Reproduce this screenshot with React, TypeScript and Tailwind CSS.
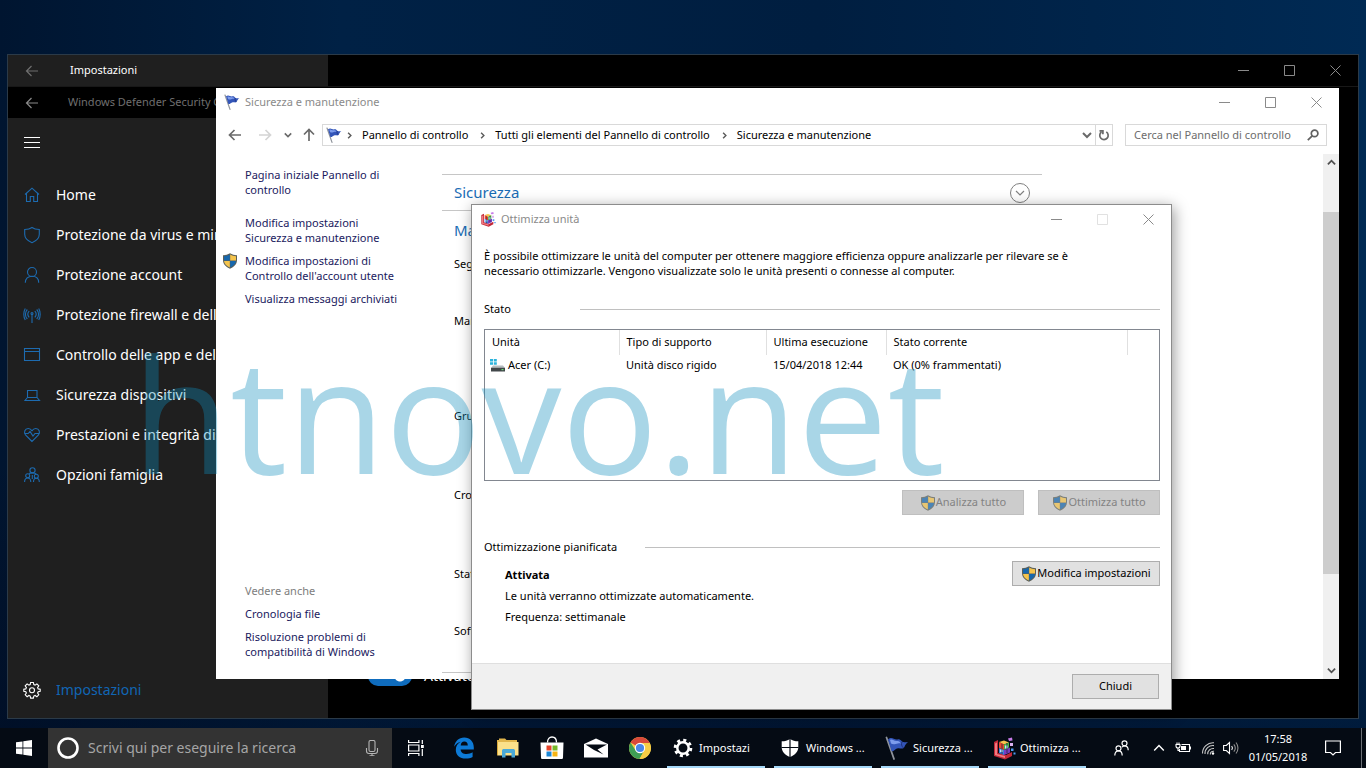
import type { ReactNode } from "react";

type IconProps = { className?: string };

const securityNav = [
  { label: "Home", icon: <HomeIcon /> },
  { label: "Protezione da virus e minacce", icon: <ShieldOutlineIcon /> },
  { label: "Protezione account", icon: <PersonIcon /> },
  { label: "Protezione firewall e della rete", icon: <AntennaIcon /> },
  { label: "Controllo delle app e del browser", icon: <BrowserIcon /> },
  { label: "Sicurezza dispositivi", icon: <LaptopIcon /> },
  { label: "Prestazioni e integrità dispositivo", icon: <HeartIcon /> },
  { label: "Opzioni famiglia", icon: <FamilyIcon /> },
];

const maintenanceItems = [
  { label: "Segnala problemi", height: "h-[57px]" },
  { label: "Manutenzione automatica", height: "h-[95px]" },
  { label: "Gruppo Home", height: "h-[79px]" },
  { label: "Cronologia file", height: "h-[79px]" },
  { label: "Stato unità", height: "h-[57px]" },
  { label: "Software dispositivi", height: "h-[49px]" },
];

const runningApps = [
  { label: "Impostazi", icon: <GearSolidIcon /> },
  { label: "Windows ...", icon: <DefenderIcon /> },
  { label: "Sicurezza ...", icon: <FlagIcon className="w-6 h-6" /> },
  { label: "Ottimizza ...", icon: <DefragIcon className="w-6 h-6" /> },
];

export default function App() {
  return (
    <div
      className="h-screen min-h-[768px] flex flex-col overflow-hidden bg-[linear-gradient(180deg,transparent_0%,transparent_60%,rgba(0,8,28,0.5)_100%),linear-gradient(90deg,#001530_0%,#002145_25%,#001e40_60%,#002a54_100%)] font-['Noto_Sans','Open_Sans',sans-serif] text-[11px] text-black"
    >
      <main className="relative flex-1">
        <SettingsWindow />
        <MaintenanceWindow />
        <OptimizeDialog />
        <div className="absolute left-[132px] top-[332px] font-['Open_Sans','Noto_Sans',sans-serif] text-[160px] leading-none font-medium text-[#118dbc]/36 pointer-events-none select-none">
          htnovo.net
        </div>
      </main>
      <Taskbar />
    </div>
  );
}

/* Windows */

function SettingsWindow() {
  return (
    <section className="absolute left-[7px] right-[7px] top-[54px] bottom-[9px] flex flex-col bg-black border border-[#2b3a48] text-white overflow-hidden">
      <header className="flex h-[31px] shrink-0">
        <div className="w-80 flex items-center bg-[#1f1f1f] pl-[17px]">
          <button aria-label="Indietro" className="text-[#6f6f6f]">
            <ArrowIcon />
          </button>
          <span className="pl-[31px]">Impostazioni</span>
        </div>
        <WindowButtons className="ml-auto text-[#8a8a8a] pr-[17px]" />
      </header>
      <div className="flex items-center h-8 shrink-0 pl-[17px] text-[#6f6f6f] border-t border-[#181818]">
        <button aria-label="Indietro" className="text-[#8a8a8a]">
          <ArrowIcon />
        </button>
        <span className="pl-[29px]">Windows Defender Security Center</span>
      </div>
      <div className="flex flex-1 min-h-0">
        <aside className="w-80 flex flex-col bg-[#1f1f1f] pl-4">
          <button aria-label="Menu" className="h-12 w-4 flex flex-col justify-center gap-1">
            <span className="h-px w-4 bg-white" />
            <span className="h-px w-4 bg-white" />
            <span className="h-px w-4 bg-white" />
          </button>
          <nav className="pt-[9px]">
            {securityNav.map((item) => (
              <a key={item.label} href="#" className="flex items-center gap-4 h-10 text-sm whitespace-nowrap">
                <span className="text-[#1d6bb0]">{item.icon}</span>
                {item.label}
              </a>
            ))}
          </nav>
          <a href="#" className="mt-auto mb-2 flex items-center gap-4 h-10 text-sm text-[#1166b5]">
            <GearOutlineIcon />
            Impostazioni
          </a>
        </aside>
        <div className="flex-1 flex items-end pl-10 pb-8">
          <label className="flex items-center gap-3 text-sm">
            <input
              type="checkbox"
              defaultChecked
              className="appearance-none w-11 h-5 rounded-full bg-[#0f6cbd] bg-[radial-gradient(circle_at_32px_10px,white_5px,transparent_6px)]"
            />
            Attivato
          </label>
        </div>
      </div>
    </section>
  );
}

function MaintenanceWindow() {
  return (
    <section className="absolute left-[216px] right-[27px] top-[88px] bottom-[49px] flex flex-col bg-white overflow-hidden">
      <header className="flex items-center h-7 shrink-0 pl-2 gap-[5px] text-[#8a8a8a]">
        <FlagIcon className="w-4 h-4" />
        Sicurezza e manutenzione
        <WindowButtons className="ml-auto pr-[17px]" />
      </header>

      <div className="flex items-center h-[38px] shrink-0 pl-3 pr-3">
        <div className="flex items-center w-[94px] text-[#6a6a6a]">
          <button aria-label="Indietro"><ArrowIcon bold /></button>
          <button aria-label="Avanti" className="ml-4 rotate-180 text-[#d4d4d4]"><ArrowIcon bold /></button>
          <button aria-label="Percorsi recenti" className="ml-3"><ChevronIcon className="w-2 h-2" /></button>
          <button aria-label="Su" className="ml-[10px] rotate-90"><ArrowIcon bold /></button>
        </div>
        <nav className="flex-1 flex items-center h-[22px] border border-[#d9d9d9] pl-[3px]">
          <FlagIcon className="w-4 h-4 mr-1" />
          <Crumb>Pannello di controllo</Crumb>
          <Crumb>Tutti gli elementi del Pannello di controllo</Crumb>
          <Crumb>Sicurezza e manutenzione</Crumb>
          <button aria-label="Posizioni precedenti" className="ml-auto mr-[3px] text-[#6a6a6a]">
            <ChevronIcon className="w-[10px] h-[10px]" />
          </button>
          <button aria-label="Aggiorna" className="w-[17px] h-full flex items-center justify-center border-l border-[#d9d9d9] text-[#6a6a6a]">
            <RefreshIcon />
          </button>
        </nav>
        <label className="ml-3 flex items-center w-[202px] h-[22px] border border-[#d9d9d9] pl-2 pr-[7px]">
          <input
            type="search"
            aria-label="Cerca nel Pannello di controllo"
            placeholder="Cerca nel Pannello di controllo"
            className="flex-1 min-w-0 outline-none placeholder:text-[#6d6d6d] placeholder:opacity-100"
          />
          <SearchIcon />
        </label>
      </div>

      <div className="flex flex-1 min-h-0">
        <aside className="w-[226px] shrink-0 flex flex-col justify-between pl-[29px] pt-[13px] pb-5 leading-[15px] text-[#1a1a5e]">
          <nav className="flex flex-col items-start gap-2">
            <a href="#" className="mb-[10px]">
              Pagina iniziale Pannello di<br />controllo
            </a>
            <a href="#">
              Modifica impostazioni<br />Sicurezza e manutenzione
            </a>
            <a href="#" className="relative">
              <UacShieldIcon className="absolute -left-[23px] top-0 w-4 h-4" />
              Modifica impostazioni di<br />Controllo dell'account utente
            </a>
            <a href="#">Visualizza messaggi archiviati</a>
          </nav>
          <nav className="flex flex-col items-start gap-2">
            <span className="text-[#7d7d7d]">Vedere anche</span>
            <a href="#">Cronologia file</a>
            <a href="#">
              Risoluzione problemi di<br />compatibilità di Windows
            </a>
          </nav>
        </aside>

        <div className="flex-1 min-w-0 pt-5 overflow-hidden">
          <div className="max-w-[600px] border-b border-[#c6c6c6]">
            <div className="flex items-center justify-between h-[37px] pl-3 pr-3 border-y border-[#c6c6c6]">
              <h2 className="text-[15px] text-[#1a6cb5]">Sicurezza</h2>
              <button
                aria-label="Espandi"
                className="w-5 h-5 flex items-center justify-center rounded-full border border-[#808080] text-[#808080]"
              >
                <ChevronIcon thin className="w-[10px] h-[10px]" />
              </button>
            </div>
            <h2 className="h-[38px] flex items-center pl-3 text-[15px] text-[#1a6cb5]">Manutenzione</h2>
            <ul className="pl-3 pt-[7px] leading-4">
              {maintenanceItems.map((item) => (
                <li key={item.label} className={item.height}>
                  {item.label}
                </li>
              ))}
            </ul>
          </div>
        </div>

        <div className="w-4 shrink-0 flex flex-col bg-[#f0f0f0] text-[#505050]">
          <button aria-label="Scorri su" className="h-[58px] flex justify-center pt-1">
            <ChevronIcon className="w-[9px] h-[9px] rotate-180" />
          </button>
          <div className="flex-1 bg-[#cdcdcd]" />
          <button aria-label="Scorri giù" className="h-[105px] flex justify-center items-end pb-1">
            <ChevronIcon className="w-[9px] h-[9px]" />
          </button>
        </div>
      </div>
    </section>
  );
}

function OptimizeDialog() {
  return (
    <section className="absolute left-[471px] right-[194px] top-[204px] bottom-[18px] flex flex-col bg-white border border-[#8c8c8c] shadow-[2px_3px_14px_rgba(0,0,0,0.4)]">
      <header className="flex items-center h-7 shrink-0 pl-2 gap-[5px] text-[#8a8a8a]">
        <DefragIcon className="w-4 h-4" />
        Ottimizza unità
        <WindowButtons className="ml-auto pr-[17px]" maximizeDisabled />
      </header>

      <div className="flex-1 pl-3 pr-[11px] pt-[15px]">
        <p className="leading-[15px] max-w-[600px]">
          È possibile ottimizzare le unità del computer per ottenere maggiore efficienza oppure analizzarle per rilevare se è
          necessario ottimizzarle. Vengono visualizzate solo le unità presenti o connesse al computer.
        </p>

        <div className="mt-[23px] flex items-center leading-4">
          <h3 className="w-24">Stato</h3>
          <hr className="flex-1 border-[#c0c0c0]" />
        </div>

        <div className="mt-3 h-[152px] border border-[#828790]">
          <table className="w-full table-fixed text-left">
            <thead>
              <tr className="h-[25px]">
                <th className="w-[134px] pl-[7px] font-normal border-r border-[#e0e0e0]">Unità</th>
                <th className="w-[147px] pl-[7px] font-normal border-r border-[#e0e0e0]">Tipo di supporto</th>
                <th className="w-[120px] pl-[7px] font-normal border-r border-[#e0e0e0]">Ultima esecuzione</th>
                <th className="w-[241px] pl-[7px] font-normal border-r border-[#e0e0e0]">Stato corrente</th>
                <th />
              </tr>
            </thead>
            <tbody>
              <tr className="h-5">
                <td className="pl-[5px]">
                  <span className="flex items-center gap-[3px]">
                    <DriveIcon />
                    Acer (C:)
                  </span>
                </td>
                <td className="pl-[7px]">Unità disco rigido</td>
                <td className="pl-[7px]">15/04/2018 12:44</td>
                <td className="pl-[7px]">OK (0% frammentati)</td>
                <td />
              </tr>
            </tbody>
          </table>
        </div>

        <div className="mt-[9px] flex justify-end gap-[14px]">
          <button disabled className="flex items-center justify-center w-[122px] h-[25px] bg-[#cccccc] border border-[#bfbfbf] text-[#838383]">
            <UacShieldIcon className="w-4 h-4 opacity-70" />
            Analizza tutto
          </button>
          <button disabled className="flex items-center justify-center w-[122px] h-[25px] bg-[#cccccc] border border-[#bfbfbf] text-[#838383]">
            <UacShieldIcon className="w-4 h-4 opacity-70" />
            Ottimizza tutto
          </button>
        </div>

        <div className="mt-6 flex items-center leading-4">
          <h3 className="w-[161px]">Ottimizzazione pianificata</h3>
          <hr className="flex-1 border-[#c0c0c0]" />
        </div>

        <div className="mt-[6px] pl-[21px] flex justify-between items-start">
          <div className="pt-[6px] flex flex-col gap-[5px] leading-4">
            <strong>Attivata</strong>
            <p>Le unità verranno ottimizzate automaticamente.</p>
            <p>Frequenza: settimanale</p>
          </div>
          <button className="flex items-center justify-center w-[148px] h-[25px] bg-[#e1e1e1] border border-[#adadad]">
            <UacShieldIcon className="w-4 h-4" />
            Modifica impostazioni
          </button>
        </div>
      </div>

      <footer className="flex items-center justify-end h-[46px] shrink-0 pr-3 bg-[#f0f0f0] border-t border-[#dfdfdf]">
        <button className="w-[87px] h-[25px] bg-[#e1e1e1] border border-[#adadad]">Chiudi</button>
      </footer>
    </section>
  );
}

function Taskbar() {
  return (
    <footer className="flex items-stretch h-10 shrink-0 bg-[#050b14] text-white">
      <button aria-label="Start" className="w-12 flex items-center justify-center">
        <WindowsLogo />
      </button>
      <label className="w-[344px] flex items-center pl-2 pr-3 bg-[#333333]">
        <svg className="w-6 h-6" viewBox="0 0 24 24" fill="none">
          <circle cx="12" cy="12" r="9.5" stroke="white" strokeWidth="2.6" />
        </svg>
        <input
          type="search"
          aria-label="Scrivi qui per eseguire la ricerca"
          placeholder="Scrivi qui per eseguire la ricerca"
          className="ml-2 flex-1 min-w-0 text-sm outline-none placeholder:text-[#a6a6a6] placeholder:opacity-100"
        />
        <MicIcon />
      </label>
      <button aria-label="Visualizzazione attività" className="w-12 flex items-center justify-center">
        <TaskViewIcon />
      </button>
      <div className="flex">
        <PinnedApp name="Microsoft Edge"><EdgeIcon /></PinnedApp>
        <PinnedApp name="Esplora file"><FolderIcon /></PinnedApp>
        <PinnedApp name="Microsoft Store"><StoreIcon /></PinnedApp>
        <PinnedApp name="Posta"><MailIcon /></PinnedApp>
        <PinnedApp name="Google Chrome"><ChromeIcon /></PinnedApp>
      </div>
      <div className="flex gap-[9px] pl-[5px]">
        {runningApps.map((app) => (
          <button
            key={app.label}
            className="w-[98px] flex items-center gap-1 pl-1 pt-[2px] border-b-2 border-[#a5d8f8] whitespace-nowrap"
          >
            {app.icon}
            {app.label}
          </button>
        ))}
      </div>
      <div className="ml-auto flex items-center">
        <button aria-label="Contatti" className="mr-6"><PeopleIcon /></button>
        <button aria-label="Mostra icone nascoste" className="mr-[10px]">
          <ChevronIcon thin className="w-3 h-3 rotate-180" />
        </button>
        <button aria-label="Batteria" className="mr-[10px]"><BatteryIcon /></button>
        <button aria-label="Rete" className="mr-[6px]"><WifiIcon /></button>
        <button aria-label="Volume" className="mr-2"><VolumeIcon /></button>
        <button className="w-[62px] text-center leading-[18px]">
          17:58<br />01/05/2018
        </button>
        <button aria-label="Centro notifiche" className="ml-4"><NotificationIcon /></button>
        <button aria-label="Mostra desktop" className="ml-5 w-[5px] h-10 border-l border-[#6b6f75]" />
      </div>
    </footer>
  );
}

/* Small parts */

function WindowButtons({ className, maximizeDisabled }: IconProps & { maximizeDisabled?: boolean }) {
  return (
    <div className={`flex items-center gap-[35px] ${className}`}>
      <button aria-label="Riduci a icona">
        <svg className="w-[11px] h-[11px]" viewBox="0 0 11 11" stroke="currentColor"><path d="M0 5.5h11" /></svg>
      </button>
      <button aria-label="Ingrandisci" disabled={maximizeDisabled} className={maximizeDisabled ? "opacity-25" : ""}>
        <svg className="w-[11px] h-[11px]" viewBox="0 0 11 11" fill="none" stroke="currentColor"><path d="M.5.5h10v10H.5z" /></svg>
      </button>
      <button aria-label="Chiudi">
        <svg className="w-[11px] h-[11px]" viewBox="0 0 11 11" stroke="currentColor"><path d="M.5.5l10 10M10.5.5l-10 10" /></svg>
      </button>
    </div>
  );
}

function Crumb({ children }: { children: ReactNode }) {
  return (
    <>
      <ChevronIcon className="w-[7px] h-[7px] -rotate-90 mr-[9px] text-[#5a5a5a]" />
      <a href="#" className="mr-[11px] whitespace-nowrap">{children}</a>
    </>
  );
}

function PinnedApp({ name, children }: { name: string; children: ReactNode }) {
  return (
    <button aria-label={name} className="w-11 flex items-center justify-center first:ml-[2px]">
      {children}
    </button>
  );
}

/* Icons */

function ArrowIcon({ bold }: { bold?: boolean }) {
  return (
    <svg className="w-[14px] h-[14px]" viewBox="0 0 14 14" fill="none" stroke="currentColor" strokeWidth={bold ? 1.7 : 1.2}>
      <path d="M13 7H1.5M6.5 2l-5 5 5 5" />
    </svg>
  );
}

function ChevronIcon({ className, thin }: IconProps & { thin?: boolean }) {
  return (
    <svg className={className} viewBox="0 0 10 10" fill="none" stroke="currentColor" strokeWidth={thin ? 1.2 : 2}>
      <path d="M1 3l4 4 4-4" />
    </svg>
  );
}

function RefreshIcon() {
  return (
    <svg className="w-3 h-3" viewBox="0 0 12 12" fill="none" stroke="currentColor" strokeWidth="1.7">
      <path d="M8.300 2.900a4.200 4.200 0 1 1-4.800.1M1.500 1.800h3.400v3.400" />
    </svg>
  );
}

function SearchIcon() {
  return (
    <svg className="w-3 h-3 text-[#606060]" viewBox="0 0 12 12" fill="none" stroke="currentColor" strokeWidth="1.7">
      <circle cx="7.6" cy="4.4" r="3.3" />
      <path d="M5.2 6.8L.8 11.2" />
    </svg>
  );
}

function FlagIcon({ className }: IconProps) {
  return (
    <svg className={className} viewBox="0 0 24 24">
      <path d="M1.5 1.5L9 23" stroke="#8f949c" strokeWidth="1.8" strokeLinecap="round" />
      <path d="M3 3.5c4-3.5 6 .8 9.500 0 2.500-.6 3 .7 4.500 2 1.500 1.200 4 .6 6 .4-2 1.600-3 3.400-3.600 5-1.400 3-4 1-6.400 1.400-3 .5-4 3.700-6.500 2.600z" fill="#3355b8" />
      <path d="M5 4c2.500-1.400 4 1.500 7 1 2-.3 3 .8 3.800 2.500-2.800-1-4 .5-6.300.8-1.500.2-2.500-.3-3.500-.8z" fill="#7d9cec" />
      <path d="M17 6c-1 2-.5 4 1.500 6" stroke="#1d2f7a" strokeWidth="1" fill="none" />
    </svg>
  );
}

function UacShieldIcon({ className }: IconProps) {
  return (
    <svg className={className} viewBox="0 0 16 16">
      <path d="M8 .3C6 1.600 3.500 2.200 1 2.200V7c0 4.200 3 7 7 8.800 4-1.800 7-4.600 7-8.800V2.200C12.500 2.200 10 1.600 8 .3z" fill="#5b5f58" />
      <path d="M7.800 1.500C6 2.500 4 3 2 3.200V7.600h5.800z" fill="#1767ac" />
      <path d="M8.200 1.500C10 2.500 12 3 14 3.200v4.400H8.200z" fill="#f5c44c" />
      <path d="M2 8h5.800v6.600C4.500 13 2.300 11 2 8z" fill="#f5c44c" />
      <path d="M14 8H8.200v6.600C11.500 13 13.700 11 14 8z" fill="#1767ac" />
    </svg>
  );
}

function DefragIcon({ className }: IconProps) {
  return (
    <svg className={className} viewBox="0 0 24 24">
      <path d="M2 6l4-2v13l8 2 6-3v4l-7 3.500L2 20z" fill="#c22838" />
      <path d="M3 7.500l2-1V18l8 2v2L3 19z" fill="#f07a80" />
      <path d="M7 6l5-1.500 5 2-5 2z" fill="#f6c34c" />
      <path d="M7 6l5 2.500V14l-5-2z" fill="#e8472f" />
      <path d="M12 8.500l5-2v5L12 14z" fill="#4ab648" />
      <path d="M7 12l5 2v5l-5-2z" fill="#3b7fe0" />
      <path d="M12 14l6-2.500v5L12 19z" fill="#7a3cc0" />
      <path d="M13 9.500h3v3h-3zM8 13.500h3v2.500H8z" fill="#b9e7ff" />
      <path d="M10 8v10M15 7v10" stroke="#27263a" strokeWidth=".8" />
      <path d="M16 2.500l4-1 .5 3-3.500.5z" fill="#c77be8" />
      <path d="M18 7h3v3h-3z" fill="#ddb2f0" />
      <path d="M19 12.500h2.500v2.500H19zM21.500 16.500h2v2h-2z" fill="#4e9cf0" />
    </svg>
  );
}

function DriveIcon() {
  return (
    <svg className="w-[15px] h-[15px]" viewBox="0 0 15 15">
      <path d="M0 1h3v2.500H0zM3.800 1h3v2.500h-3zM0 4.300h3v2.500H0zM3.800 4.300h3v2.500h-3z" fill="#2bb3dc" />
      <path d="M3 7.500h10l2 2.500H1z" fill="#b5bcbf" />
      <path d="M1 9.800h14v3.700H1z" fill="#42474a" />
      <path d="M11.500 11h2v1.200h-2z" fill="#6be07a" />
    </svg>
  );
}

function NavSvg({ children, className }: { children: ReactNode; className?: string }) {
  return (
    <svg className={`w-4 h-4 overflow-visible ${className ?? ""}`} viewBox="0 0 16 16" fill="none" stroke="currentColor" strokeWidth="1.1">
      {children}
    </svg>
  );
}

function HomeIcon() {
  return <NavSvg><path d="M1 7.500l7-6.300 7 6.300M2.500 6.300v8.200h3.800V9.500h3.400v5h3.800V6.300" /></NavSvg>;
}

function ShieldOutlineIcon() {
  return <NavSvg><path d="M8 .5C6 2 3.500 2.500.7 2.500v4.800c0 4 3 6.700 7.300 8.400 4.300-1.700 7.300-4.400 7.300-8.400V2.500C12.500 2.500 10 2 8 .5z" /></NavSvg>;
}

function PersonIcon() {
  return (
    <NavSvg>
      <circle cx="8" cy="5" r="4.500" />
      <path d="M1.300 15.700c0-4 2.700-6.500 6.700-6.500s6.700 2.500 6.700 6.500" />
    </NavSvg>
  );
}

function AntennaIcon() {
  return (
    <NavSvg>
      <path d="M8 7v9M5.200 4c-1.600 1.800-1.600 4.600 0 6.400M10.800 4c1.600 1.800 1.600 4.600 0 6.400M3.300 2.500C.8 5 .8 9.500 3.300 12M12.700 2.500c2.500 2.500 2.500 7 0 9.500M1.300 1.500c-2 3-2 8.500 0 11.500M14.700 1.500c2 3 2 8.500 0 11.500" />
      <circle cx="8" cy="6.500" r="1" />
    </NavSvg>
  );
}

function BrowserIcon() {
  return <NavSvg><path d="M.5 1.500h15v12H.5zM.5 4.500h15" /></NavSvg>;
}

function LaptopIcon() {
  return <NavSvg><path d="M3.500 3.500h9.500v7H3.500zM3.500 10.500L1 13.500h14.500L13 10.500" /></NavSvg>;
}

function HeartIcon() {
  return (
    <NavSvg>
      <path d="M8 14.500L1.500 8C-.5 5.500.8 1.500 4.200 1.500c1.800 0 3 1 3.800 2.300.8-1.300 2-2.300 3.800-2.300 3.400 0 4.700 4 2.700 6.500z" />
      <path d="M.8 6.500h3.400l1.800-2 3 4.500 2-2.500h4.200" />
    </NavSvg>
  );
}

function FamilyIcon() {
  return (
    <NavSvg>
      <circle cx="8.500" cy="3.300" r="2.600" />
      <circle cx="3.700" cy="8.800" r="2" />
      <circle cx="12.300" cy="9.300" r="2" />
      <path d="M5 6.500c.6-.4 1.500-.6 3.500-.6s3.500.8 4 1.700M.6 15c0-2.500 1.200-4 3.100-4s3.100 1.500 3.100 4M9.500 15c0-2.300 1.100-3.700 2.800-3.700s3 1.400 3 3.700M8.300 8v4" />
    </NavSvg>
  );
}

function GearOutlineIcon() {
  return (
    <NavSvg className="text-white">
      <path d="M6.600.5h2.800l.4 2 1.300.6 1.800-1.200 1.900 1.900-1.200 1.800.6 1.300 2 .4v1.900l-2 .5-.6 1.300 1.200 1.800-1.900 1.900-1.800-1.200-1.300.6-.4 2H6.600l-.4-2-1.300-.6-1.800 1.200-1.900-1.900 1.200-1.800-.6-1.300-2-.5V7.300l2-.4.6-1.300-1.200-1.800 1.900-1.900 1.800 1.200 1.300-.6z" />
      <circle cx="8" cy="8.200" r="2.500" />
    </NavSvg>
  );
}

function GearSolidIcon() {
  return (
    <svg className="w-6 h-6" viewBox="0 0 24 24" fill="none" stroke="white">
      <circle cx="12" cy="12" r="5.700" strokeWidth="2.500" />
      <circle cx="12" cy="12" r="7.800" strokeWidth="3" strokeDasharray="3 3.126" />
    </svg>
  );
}

function DefenderIcon() {
  return (
    <svg className="w-6 h-6" viewBox="0 0 24 24">
      <path d="M12 3C9.500 4.600 7 5.300 3.700 5.300V11c0 4.700 3.300 8 8.300 10 5-2 8.300-5.300 8.300-10V5.300C17 5.300 14.500 4.600 12 3z" fill="white" />
      <path d="M12 3v18M3.500 11.500h17" stroke="#050b14" strokeWidth="1.200" />
    </svg>
  );
}

function WindowsLogo() {
  return (
    <svg className="w-4 h-4" viewBox="0 0 16 16" fill="white">
      <path d="M0 2.300L6.500 1.400v6.200H0zM7.300 1.300L16 0v7.600H7.300zM0 8.400h6.500v6.200L0 13.700zM7.300 8.400H16V16l-8.700-1.200z" />
    </svg>
  );
}

function MicIcon() {
  return (
    <svg className="w-4 h-4 text-[#b5b5b5]" viewBox="0 0 16 16" fill="none" stroke="currentColor" strokeWidth="1.100">
      <rect x="5" y=".5" width="6" height="11" rx="1.500" />
      <path d="M2.500 8v3c0 1.500 1 2.500 2.500 2.500h6c1.500 0 2.500-1 2.500-2.500V8M8 13.500V16M5.500 15.700h5" />
    </svg>
  );
}

function TaskViewIcon() {
  return (
    <svg className="w-4 h-4" viewBox="0 0 16 16" fill="none" stroke="white" strokeWidth="1.200">
      <path d="M.6 0v2.500h10.300V0M.6 16v-2.500h10.300V16M.6 5h10.300v6H.6zM14.300 0v4M14.300 9v7" />
      <path d="M13 5h2.800v3H13z" fill="white" stroke="none" />
    </svg>
  );
}

function EdgeIcon() {
  return (
    <svg className="w-5 h-[22px]" viewBox="0 0 20 22">
      <path d="M.2 9.700C.9 4.200 4.800.4 10.200.4c5.600 0 9.600 4 9.600 9.800v2.200H6.600c.2 3 2.700 4.600 6 4.600 2.300 0 4.200-.6 6-1.700v4.600c-1.900 1-4.200 1.600-6.900 1.600-6 0-9.900-3.400-9.900-8.600 0-3.500 1.800-6.500 5-8.100C3.900 5.400 1.700 7.200.2 9.700zM6.700 8.600h7.100c0-2.700-1.300-4.100-3.500-4.100-2.100 0-3.400 1.500-3.600 4.100z" fill="#0d7ad6" />
    </svg>
  );
}

function FolderIcon() {
  return (
    <svg className="w-[22px] h-5" viewBox="0 0 22 20">
      <path d="M0 2h2V.5h6L9.500 2H20v4H0z" fill="#e2b64c" />
      <path d="M1 4h20.500v13.500H1z" fill="#fbe08a" />
      <path d="M0 4h1v13.500H0z" fill="#d9a83a" />
      <path d="M5 19.500V13c0-1.500.7-2 2-2h9c1.300 0 2 .5 2 2v6.500h-3.500V15h-6v4.500z" fill="#4aa9d8" />
    </svg>
  );
}

function StoreIcon() {
  return (
    <svg className="w-6 h-6" viewBox="0 0 24 24">
      <path d="M7.500 6.500C7.500 3 9.500 1 12 1s4.500 2 4.500 5.500" fill="none" stroke="white" strokeWidth="1.300" />
      <path d="M.5 6.500h23l-.5 15c0 1-.7 1.500-1.500 1.500h-19C1.700 23 1 22.500 1 21.500z" fill="white" />
      <path d="M6.500 9.500h5v5h-5z" fill="#e5432a" />
      <path d="M12.500 9.500h5v5h-5z" fill="#76b82a" />
      <path d="M6.500 15.500h5v5h-5z" fill="#1b87d6" />
      <path d="M12.500 15.500h5v5h-5z" fill="#f6b414" />
    </svg>
  );
}

function MailIcon() {
  return (
    <svg className="w-6 h-5" viewBox="0 0 24 20">
      <path d="M0 6L12 .5 24 6v13.500H0z" fill="white" />
      <path d="M1.500 6.500h21.500L13.500 11.500l6 5L10 12z" fill="#050b14" />
    </svg>
  );
}

function ChromeIcon() {
  return (
    <svg className="w-[22px] h-[22px]" viewBox="0 0 22 22">
      <circle cx="11" cy="11" r="11" fill="#f7cd45" />
      <path d="M11 11L1.500 5.500A11 11 0 0 1 20.500 5.500L20.700 6H11z" fill="#d9493a" />
      <path d="M1.500 5.500A11 11 0 0 0 10.500 22L15.300 13.500 11 11 6.700 13.500z" fill="#3f9e55" />
      <path d="M11 6h9.700a11 11 0 0 1-10.200 16l4.800-8.500z" fill="#f7cd45" />
      <circle cx="11" cy="11" r="5.200" fill="white" />
      <circle cx="11" cy="11" r="4.100" fill="#4a86e8" />
    </svg>
  );
}

function PeopleIcon() {
  return (
    <svg className="w-[15px] h-4" viewBox="0 0 15 16" fill="none" stroke="white" strokeWidth="1.200">
      <circle cx="10.500" cy="3.300" r="2.500" />
      <circle cx="4.500" cy="8.300" r="2.500" />
      <path d="M.8 15.500c0-3 1.300-4.700 3.700-4.700s3.700 1.700 3.700 4.700M8 7.200c.6-.8 1.400-1.300 2.500-1.300 2.300 0 3.700 1.600 3.700 4.300" />
    </svg>
  );
}

function BatteryIcon() {
  return (
    <svg className="w-4 h-4" viewBox="0 0 16 16" fill="none" stroke="white" strokeWidth="1.100">
      <path d="M6.500 4.500h8v7h-10V9M15.500 6.500v3M1 4.500h4v1.500c0 1.200-.8 2-2 2s-2-.8-2-2zM2 4.500V2.500M4 4.500V2.500M3 8v2.500h1.500" />
      <path d="M6 6h5v4H6z" fill="white" stroke="none" />
    </svg>
  );
}

function WifiIcon() {
  return (
    <svg className="w-4 h-4" viewBox="0 0 16 16" fill="none" stroke="#c9c9c9" strokeWidth="1.100">
      <path d="M1.500 13.500A10.500 10.500 0 0 1 13 2.800M4 14A8 8 0 0 1 13 5.600M6.700 14.300A5.500 5.500 0 0 1 13 8.500M9.300 14.500A3 3 0 0 1 13 11.300" />
      <circle cx="12" cy="13.500" r="1.200" fill="white" stroke="none" />
    </svg>
  );
}

function VolumeIcon() {
  return (
    <svg className="w-4 h-4" viewBox="0 0 16 16" fill="none" stroke="white" strokeWidth="1.100">
      <path d="M.6 5.500h2.700L6.500 2.500v11L3.300 10.500H.6zM8.700 6c.9 1.200.9 2.800 0 4" />
      <path d="M10.800 4.300c1.800 2.200 1.800 5.200 0 7.400M13 2.500c2.600 3.200 2.600 7.800 0 11" stroke="#8d8d8d" />
    </svg>
  );
}

function NotificationIcon() {
  return (
    <svg className="w-4 h-4" viewBox="0 0 16 16" fill="none" stroke="white" strokeWidth="1.200">
      <path d="M.6 1h14.800v11.500h-4.900L8 15l-2.500-2.500H.6z" />
    </svg>
  );
}
